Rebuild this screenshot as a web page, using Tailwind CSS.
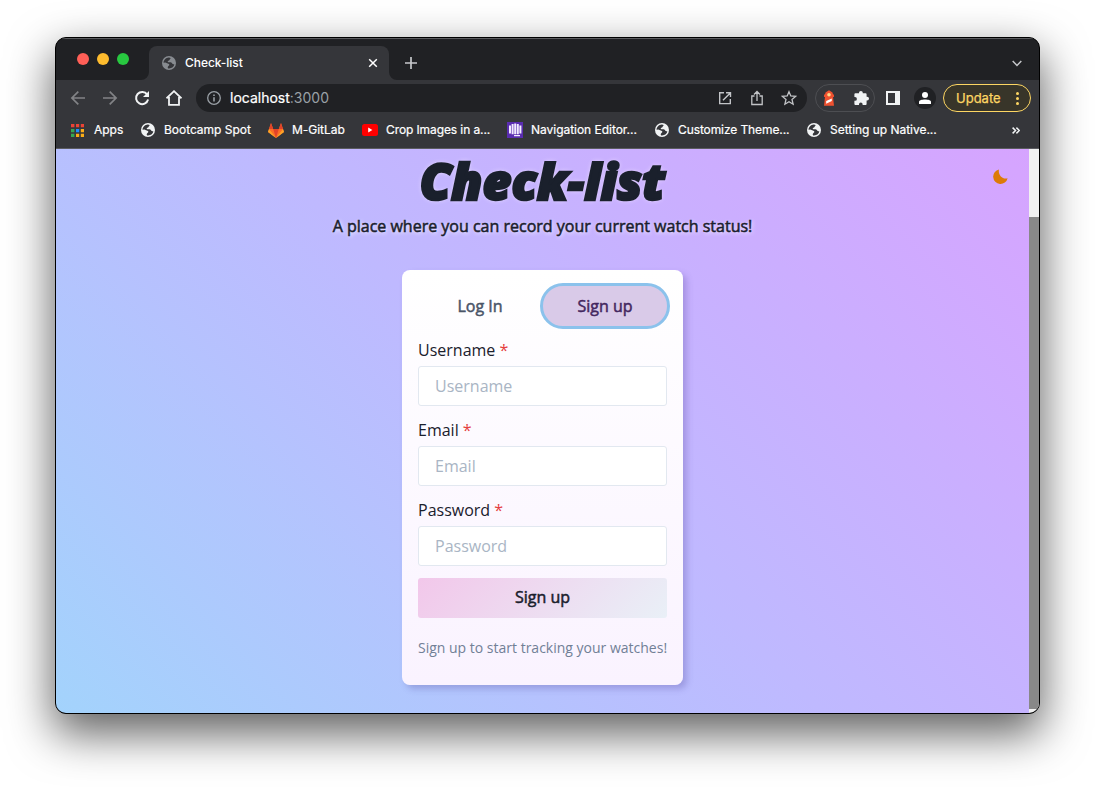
<!DOCTYPE html>
<html lang="en">
<head>
<meta charset="utf-8">
<title>Check-list</title>
<script src="https://cdn.jsdelivr.net/npm/@tailwindcss/browser@4"></script>
</head>
<body class="h-[787px] w-[1095px] overflow-hidden bg-white pt-[37px] pl-[55px]">
<svg class="hidden">
  <symbol id="globe" viewBox="0 0 14 14"><circle cx="7" cy="7" r="7" fill="currentColor"/><path d="M6.8 1.4 C8.6 1.6 9 2.2 8.2 3 C7.4 3.8 7.6 4.6 6.4 4.8 C5.4 5 5.6 6.2 6.6 6.3 H8.6 C10 6.4 9.6 7.8 10.8 8 C11.8 8.2 12 8.8 12.4 7.8 C12.2 10.6 10 12.5 7 12.5 C5.8 12.5 5.6 11.8 5.8 11 C6.2 9.6 7.4 9.8 7.4 8.8 C7.2 7.8 4.6 7.6 3.4 6.6 L1.5 6.8 C1.6 4 3.8 1.5 6.8 1.4Z" fill="var(--land)"/></symbol>
</svg>
<main class="flex h-[677px] w-[985px] flex-col overflow-hidden rounded-[11px] border border-black bg-[#202124] font-['Inter',sans-serif] text-white shadow-[0_18px_45px_2px_rgba(0,0,0,0.62)]">
  <!-- tab strip -->
  <header class="flex h-[42px] shrink-0 items-end border-t border-[#5a5b5e]">
    <div class="flex h-full w-[93px] items-center gap-2 pb-[2px] pl-[21px]">
      <i class="size-3 rounded-full bg-[#ff5f57]"></i><i class="size-3 rounded-full bg-[#febc2e]"></i><i class="size-3 rounded-full bg-[#28c840]"></i>
    </div>
    <div class="relative flex h-[34px] w-[240px] items-center rounded-t-lg bg-[#35363a] pr-[11px] pl-[13px]">
      <svg class="absolute bottom-0 -left-2 size-2" viewBox="0 0 8 8"><path d="M8 0V8H0A8 8 0 0 0 8 0Z" fill="#35363a"/></svg>
      <svg class="absolute -right-2 bottom-0 size-2" viewBox="0 0 8 8"><path d="M0 0V8H8A8 8 0 0 1 0 0Z" fill="#35363a"/></svg>
      <svg class="size-[14px] text-[#878b90] [--land:#35363a]"><use href="#globe"/></svg>
      <span class="ml-[9px] grow text-[12px] font-medium tracking-[-0.05px]">Check-list</span>
      <svg class="size-[10px]" viewBox="0 0 10 10" stroke="#fff" stroke-width="1.5"><path d="M1.2 1.2 8.8 8.8M8.8 1.2 1.2 8.8"/></svg>
    </div>
    <svg class="mb-[11px] ml-4 size-[12px]" viewBox="0 0 12 12" stroke="#c6c8cb" stroke-width="1.7"><path d="M6 0V12M0 6H12"/></svg>
    <svg class="mr-[17px] mb-[13px] ml-auto h-[7px] w-[10px]" viewBox="0 0 10 7" fill="none" stroke="#c6c8cb" stroke-width="1.5"><path d="M.7 1 5 5.4 9.3 1"/></svg>
  </header>
  <!-- toolbar -->
  <div class="flex h-[36px] shrink-0 items-center bg-[#35363a] pl-[14px]">
    <svg class="h-4 w-4" viewBox="0 0 16 16" fill="none" stroke="#828386" stroke-width="1.7"><path d="M15 8H2M8.3 1.6 1.9 8 8.3 14.4"/></svg>
    <svg class="ml-4 h-4 w-4" viewBox="0 0 16 16" fill="none" stroke="#828386" stroke-width="1.7"><path d="M1 8H14M7.7 1.6 14.1 8 7.7 14.4"/></svg>
    <svg class="ml-4 h-4 w-4" viewBox="0 0 16 16" fill="none" stroke="#f1f3f4" stroke-width="2"><path d="M13.2 4.6A6.1 6.1 0 1 0 14.1 9.6"/><path d="M15 1V7H9L11.3 4.7Z" fill="#f1f3f4" stroke="none"/></svg>
    <svg class="ml-4 h-4 w-4" viewBox="0 0 16 16" fill="none" stroke="#f1f3f4" stroke-width="1.8"><path d="M.5 8.3 8 1.2 15.5 8.3M3 7V14.8H13V7"/></svg>
    <div class="ml-[14px] flex h-7 w-[611px] items-center rounded-full bg-[#202124] pl-[11px]">
      <svg class="size-[14px]" viewBox="0 0 14 14" fill="none" stroke="#9aa0a6" stroke-width="1.3"><circle cx="7" cy="7" r="6.3"/><path d="M7 6.2V10.4M7 3.5V5" stroke-width="1.6"/></svg>
      <span class="ml-[9px] text-[14px] leading-5 -mt-px [-webkit-text-stroke:0.2px_currentColor]">localhost<span class="text-[#9aa0a6] [-webkit-text-stroke:0px]">:3000</span></span>
      <svg class="mr-[18px] ml-auto h-[14px] w-[14px]" viewBox="0 0 14 14" fill="none" stroke="#c2c4c7" stroke-width="1.4"><path d="M6 1.7H1.7V12.6H12.3V8M8 1.7H12.5V6M12.3 1.9 5 9.2"/></svg>
      <svg class="mr-[17px] h-[16px] w-[14px]" viewBox="0 0 14 16" fill="none" stroke="#c2c4c7" stroke-width="1.3"><path d="M4.5 6H1.8V14.5H12.2V6H9.5M7 11V1.8M4 4.5 7 1.5 10 4.5"/></svg>
      <svg class="mr-[10px] h-[16px] w-[16px]" viewBox="0 0 16 15" fill="none" stroke="#c2c4c7" stroke-width="1.3"><path d="M8 1.2 9.8 5.5 14.6 5.9 11 9 12.1 13.7 8 11.2 3.9 13.7 5 9 1.4 5.9 6.2 5.5Z"/></svg>
    </div>
    <div class="ml-2 flex h-7 w-[60px] items-center rounded-full border border-[#4d4e52] pl-[7px]">
      <svg class="h-4 w-3" viewBox="0 0 12 16"><path d="M2 4.5 2.5 2.5 6 .2 9.5 2.5 10 4.5H11V7H10L11 15.8H1L2 7H1V4.5Z" fill="#ee5130"/><circle cx="6" cy="4.8" r="1.8" fill="#fdd98a"/><path d="M8.8 8.5V11L3.2 13.7V11Z" fill="#fff"/></svg>
      <svg class="-mt-px ml-[19px] h-[15px] w-[15px]" viewBox="0 0 15 15" fill="#f1f3f4"><path d="M5 2.8A1.9 1.9 0 0 1 8.8 2.8V3.2H11.6A1 1 0 0 1 12.6 4.2V6.7H13.1A1.9 1.9 0 0 1 13.1 10.5H12.6V14A1 1 0 0 1 11.6 15H8.6V14.2A1.8 1.8 0 0 0 5 14.2V15H1.4A1 1 0 0 1 .4 14V10.8H1A1.9 1.9 0 0 0 1 7H.4V4.2A1 1 0 0 1 1.4 3.2H5Z"/></svg>
    </div>
    <svg class="ml-[11px] h-[14px] w-[14px]" viewBox="0 0 14 14"><path d="M0 0H14V14H0Z" fill="#f1f3f4"/><path d="M2 2H9V12H2Z" fill="#35363a"/></svg>
    <div class="ml-[14px] flex size-[22px] items-center justify-center rounded-full bg-[#202124]">
      <svg class="h-3 w-3" viewBox="0 0 12 12" fill="#fff"><circle cx="6" cy="3" r="3"/><path d="M0 12V10C0 6.8 12 6.8 12 10V12Z"/></svg>
    </div>
    <div class="ml-[7px] flex h-7 w-[88px] items-center rounded-full border-[1.5px] border-[#fdd663] bg-[#383529] pl-[12px] text-[13px] text-[#fdd663]">
      <span class="pt-px [-webkit-text-stroke:0.25px_#fdd663]">Update</span>
      <svg class="mr-[11px] ml-auto h-[13px] w-[3px]" viewBox="0 0 3 13" fill="#fdd663"><circle cx="1.5" cy="1.5" r="1.5"/><circle cx="1.5" cy="6.5" r="1.5"/><circle cx="1.5" cy="11.5" r="1.5"/></svg>
    </div>
  </div>
  <!-- bookmarks -->
  <nav class="flex h-[33px] shrink-0 items-center border-b border-[#5b5c60] bg-[#35363a] pb-1 pl-[15px] text-[12px] tracking-[-0.03px] whitespace-nowrap [--land:#35363a] [-webkit-text-stroke:0.2px_#fff]">
    <div class="flex w-[70px] items-center gap-[10px]">
      <svg class="size-[13px]" viewBox="0 0 13 13" stroke="none"><path d="M0 0H3.4V3.2H0ZM5 0H8.2V3.2H5ZM9.8 0H13V3.2H9.8Z" fill="#ea4335"/><path d="M0 5H3.4V8.2H0ZM0 9.8H3.4V13H0Z" fill="#34a853"/><path d="M5 5H8.2V8.2H5Z" fill="#1a8cff"/><path d="M9.8 5H13V8.2H9.8ZM5 9.8H8.2V13H5ZM9.8 9.8H13V13H9.8Z" fill="#fbad16"/></svg><span>Apps</span></div>
    <div class="flex w-[127px] items-center gap-[9px]"><svg class="size-[14px] text-[#f1f3f4]"><use href="#globe"/></svg><span>Bootcamp Spot</span></div>
    <div class="flex w-[94px] items-center gap-2">
      <svg class="h-[15px] w-4" viewBox="0 0 16 15"><path d="M8 15 0 9 3 0 5.2 6H10.8L13 0 16 9Z" fill="#fc6d26"/><path d="M3 0 5.2 6H1ZM13 0 10.8 6H15ZM8 15 5.2 6H10.8Z" fill="#e24329"/><path d="M0 9 1 6 8 15ZM16 9 15 6 8 15Z" fill="#fca326"/></svg><span>M-GitLab</span></div>
    <div class="flex w-[145px] items-center gap-2">
      <svg class="h-3 w-4" viewBox="0 0 16 12"><rect width="16" height="12" rx="2.5" fill="#f00"/><path d="M6.2 3.6V8.4L10.4 6Z" fill="#fff"/></svg><span class="tracking-[-0.1px]">Crop Images in a...</span></div>
    <div class="flex w-[148px] items-center gap-2">
      <svg class="size-4" viewBox="0 0 16 16"><path d="M0 0H16V16H0Z" fill="#5a2db0"/><path d="M3 3.5V11.5M5.6 2V12.2M8.2 1.5V12.2M10.8 2V12.2M13.4 3.5V11.5" stroke="#f3ecff" stroke-width="2"/><path d="M7 13.6H13" stroke="#f3ecff" stroke-width="1.3"/></svg><span>Navigation Editor...</span></div>
    <div class="flex w-[152px] items-center gap-[9px]"><svg class="size-[14px] text-[#f1f3f4]"><use href="#globe"/></svg><span class="tracking-[-0.1px]">Customize Theme...</span></div>
    <div class="flex items-center gap-[9px]"><svg class="size-[14px] text-[#f1f3f4]"><use href="#globe"/></svg><span>Setting up Native...</span></div>
    <svg class="mr-[19px] ml-auto h-[7px] w-2" viewBox="0 0 8 7" fill="none" stroke="#f1f3f4" stroke-width="1.5"><path d="M.6.6 3.5 3.5.6 6.4M4.4.6 7.3 3.5 4.4 6.4"/></svg>
  </nav>
  <!-- page -->
  <div class="flex min-h-0 grow font-['Open_Sans',sans-serif] text-[#1a202c]">
    <section class="relative flex w-[973px] flex-col items-center bg-linear-[45deg] from-[#a3d3fc] via-[#bfb9ff] to-[#d6a4ff]">
      <svg class="absolute top-[20px] right-[21px] size-[15px]" viewBox="0 0 15 15"><path d="M6 .5A7.3 7.3 0 1 0 14.6 9.2C9.6 10.7 4.8 6 6 .5Z" fill="#dd7b07"/></svg>
      <h1 class="mt-[2px] h-[61px] text-[50px] leading-[60px] font-extrabold tracking-[0.1px] whitespace-nowrap italic [-webkit-text-stroke:2.6px_#1a202c] [text-shadow:0_0_5px_#f5eaff]">Check-list</h1>
      <p class="mt-[2px] text-[16px] leading-6 whitespace-nowrap [-webkit-text-stroke:0.5px_#1a202c] [text-shadow:1px_1px_4px_#fff]">A place where you can record your current watch status!</p>
      <div class="mt-[32px] flex h-[415px] w-[281px] flex-col rounded-lg bg-linear-to-b from-white to-[#faf3ff] px-4 pt-[13px] shadow-[4px_4px_6px_rgba(80,70,150,0.28)]">
        <div class="-mr-[3px] flex h-[46px] text-[16px]">
          <div class="flex w-[124px] items-center justify-center text-[#4a5568] [-webkit-text-stroke:0.5px_#4a5568]">Log In</div>
          <div class="-ml-[2px] flex w-[130px] items-center justify-center rounded-full border-[3px] border-[#8bc2ec] bg-[#d9cae8] text-[#44275f] [-webkit-text-stroke:0.5px_#44275f]">Sign up</div>
        </div>
        <label class="mt-[9px] leading-6">Username <span class="text-[#e53e3e]">*</span></label>
        <div class="mt-1 flex h-10 shrink-0 items-center rounded-[3px] border border-[#e2e8f0] bg-white px-4 text-[#a9b5c4]">Username</div>
        <label class="mt-3 leading-6">Email <span class="text-[#e53e3e]">*</span></label>
        <div class="mt-1 flex h-10 shrink-0 items-center rounded-[3px] border border-[#e2e8f0] bg-white px-4 text-[#a9b5c4]">Email</div>
        <label class="mt-3 leading-6">Password <span class="text-[#e53e3e]">*</span></label>
        <div class="mt-1 flex h-10 shrink-0 items-center rounded-[3px] border border-[#e2e8f0] bg-white px-4 text-[#a9b5c4]">Password</div>
        <button class="mt-3 h-10 shrink-0 rounded-[3px] bg-linear-[135deg] from-[#f2c7ea] to-[#e9f0f7] pb-[2px] text-[16px] [-webkit-text-stroke:0.5px_#1a202c]">Sign up</button>
        <p class="mt-5 text-center text-[14px] leading-5 whitespace-nowrap text-[#718096]">Sign up to start tracking your watches!</p>
      </div>
    </section>
    <div class="flex grow flex-col bg-[#f1f1f1] pt-[68px] pb-1"><div class="grow bg-[#888]"></div></div>
  </div>
</main>
</body>
</html>
